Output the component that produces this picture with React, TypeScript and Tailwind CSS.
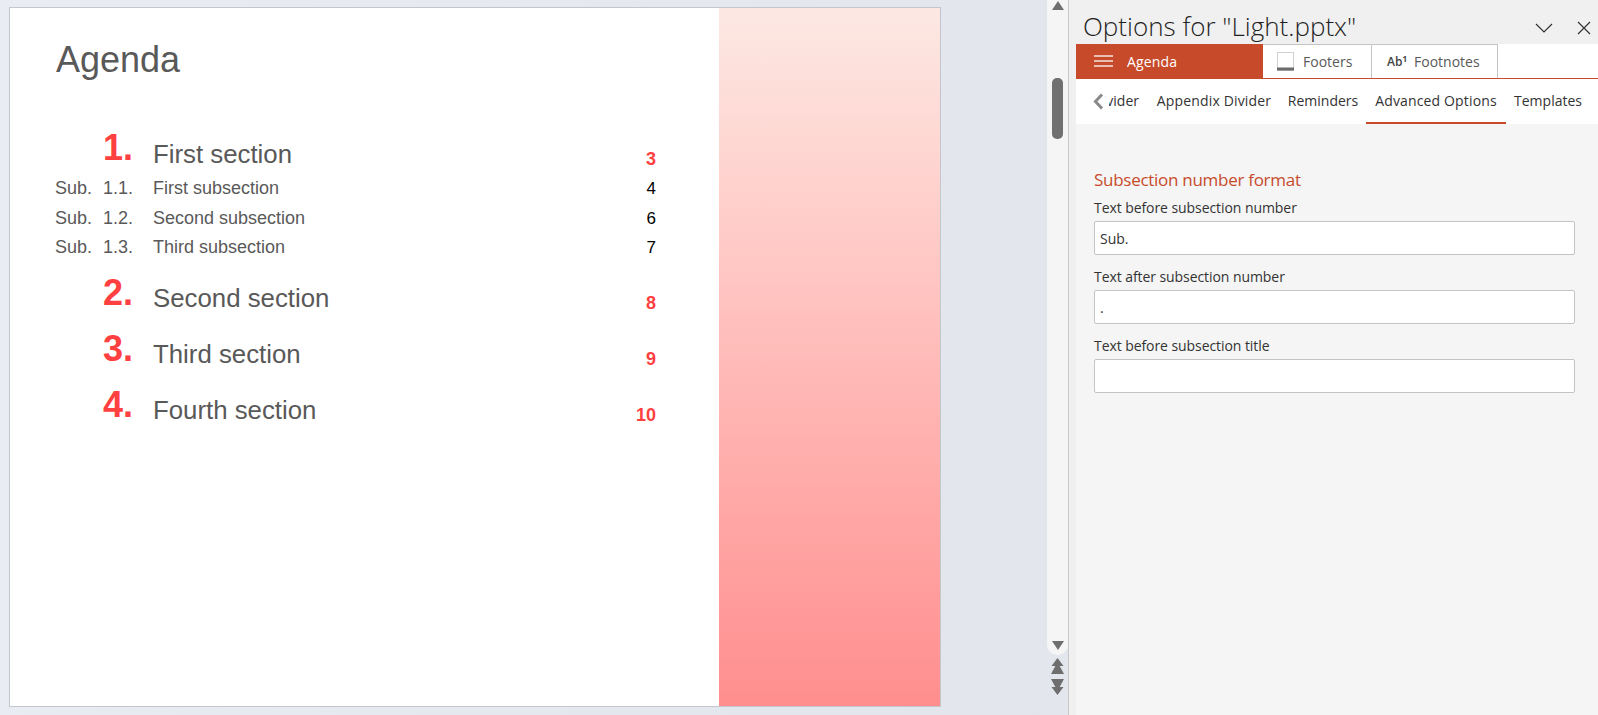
import React from "react";

const sans = "font-['Liberation_Sans',Arial,sans-serif]";
const ui = "font-['Open_Sans','Noto_Sans',sans-serif]";

function Section({ n, title, page, mt, numMt }: { n: string; title: string; page: string; mt: string; numMt: string }) {
  return (
    <div className={`flex h-[42px] items-end ${mt}`}>
      <div className="w-[47px]" />
      <div className={`w-[50px] self-start text-[36px] leading-[36px] font-bold text-[#ff4040] ${numMt}`}>{n}</div>
      <div className="w-[480px] text-[25.8px] leading-[36px] text-[#595959]">{title}</div>
      <div className="w-[23px] text-right text-[18px] leading-[26px] font-bold text-[#ff4040]">{page}</div>
    </div>
  );
}

function Sub({ n, title, page }: { n: string; title: string; page: string }) {
  return (
    <div className="flex h-[29.5px] items-center text-[18px] leading-[24px] text-[#595959]">
      <div className="-ml-[1px] w-[48px]">Sub.</div>
      <div className="w-[50px]">{n}</div>
      <div className="w-[480px]">{title}</div>
      <div className="w-[23px] pt-[2px] text-right text-[17px] text-black">{page}</div>
    </div>
  );
}

function Field({ label, value, mt }: { label: string; value: string; mt: string }) {
  return (
    <div className={mt}>
      <div className="text-[14px] leading-[20px] tracking-[-0.07px] text-[#333]">{label}</div>
      <div className="mt-[3px] flex h-[34px] items-center rounded-[2px] border border-[#c4c4c4] bg-white px-[5px] text-[14px] text-[#333]">
        {value}
      </div>
    </div>
  );
}

function Arrow({ up }: { up: boolean }) {
  return (
    <svg width="12" height="9" viewBox="0 0 12 9" className="block">
      <path d={up ? "M6 0 L12 9 H0 Z" : "M0 0 H12 L6 9 Z"} fill="#6e6e6e" />
    </svg>
  );
}

function DoubleArrow({ up }: { up: boolean }) {
  return (
    <svg width="13" height="16" viewBox="0 0 13 16" className="block">
      <g fill="#6e6e6e" transform={up ? undefined : "rotate(180 6.5 8)"}>
        <path d="M6.5 0 L12.5 8 H0.5 Z" />
        <path d="M6.5 4 L13 16 H0 Z" />
      </g>
    </svg>
  );
}

export default function App() {
  return (
    <div className={`flex h-[715px] w-[1598px] overflow-hidden ${ui}`}>
      <div className="h-full w-[1047px] bg-[linear-gradient(100deg,#e9edf3,#e2e5eb)] pt-[7px] pl-[9px]">
        <div className={`flex h-[700px] w-[932px] border border-[#c3c6cb] bg-white ${sans}`}>
          <div className="w-[709px] pl-[46px]">
            <div className="mt-[30px] text-[36px] leading-[44px] text-[#595959]">Agenda</div>
            <Section n="1." title="First section" page="3" mt="mt-[48px]" numMt="mt-0" />
            <div className="mt-[1.5px]">
              <Sub n="1.1." title="First subsection" page="4" />
              <Sub n="1.2." title="Second subsection" page="6" />
              <Sub n="1.3." title="Third subsection" page="7" />
            </div>
            <Section n="2." title="Second section" page="8" mt="mt-[11.5px]" numMt="mt-[1px]" />
            <Section n="3." title="Third section" page="9" mt="mt-[14px]" numMt="mt-[1px]" />
            <Section n="4." title="Fourth section" page="10" mt="mt-[14px]" numMt="mt-[1px]" />
          </div>
          <div className="flex-1 bg-[linear-gradient(180deg,#fce8e3,#ffd2ce_25%,#ff8e8e)]" />
        </div>
      </div>

      <div className="flex h-full w-[21px] flex-col items-center bg-[#e3e6ec]">
        <div className="flex h-[655px] w-full flex-col items-center rounded-b-[10px] bg-[#f5f5f5]">
          <div className="mt-[1px]">
            <Arrow up />
          </div>
          <div className="mt-[68px] h-[61px] w-[11px] rounded-[5px] bg-[#707070]" />
          <div className="mt-auto mb-[5px]">
            <Arrow up={false} />
          </div>
        </div>
        <div className="mt-[3px]">
          <DoubleArrow up />
        </div>
        <div className="mt-[5px]">
          <DoubleArrow up={false} />
        </div>
      </div>

      <div className="flex h-full flex-1 flex-col border-l border-[#c8c8c8] bg-[#f0f0f0]">
        <div className="flex h-[44px] items-center pt-[8px] pl-[14px]">
          <div className="text-[26px] leading-[35px] font-light whitespace-nowrap text-[#1f1f1f]">
            Options for "Light.pptx"
          </div>
          <svg width="18" height="10" viewBox="0 0 18 10" className="mt-[4px] ml-auto">
            <path d="M1 1 L9 9 L17 1" fill="none" stroke="#333" strokeWidth="1.2" />
          </svg>
          <svg width="14" height="14" viewBox="0 0 14 14" className="mt-[4px] mr-[7px] ml-[24px]">
            <path d="M1 1 L13 13 M13 1 L1 13" fill="none" stroke="#333" strokeWidth="1.2" />
          </svg>
        </div>
        <div className="ml-[7px] flex flex-1 flex-col bg-[#f5f5f5]">
          <div className="flex h-[35px] border-b border-[#c74b2b] bg-white text-[14px]">
            <div className="flex w-[187px] items-center bg-[#c74b2b] pl-[18px] text-white">
              <svg width="19" height="12" viewBox="0 0 19 12">
                <path d="M0 1 H19 M0 6 H19 M0 11 H19" stroke="#fff" strokeOpacity="0.85" strokeWidth="1.5" />
              </svg>
              <span className="ml-[14px] tracking-[0.15px]">Agenda</span>
            </div>
            <div className="flex w-[109px] items-center border-t border-r border-[#c4c4c4] pl-[14px] text-[#595959]">
              <svg width="17" height="19" viewBox="0 0 17 19">
                <rect x="0.5" y="0.5" width="16" height="18" fill="#fff" stroke="#d0d0d0" />
                <rect x="0" y="15.5" width="17" height="3" fill="#6b6b6b" />
              </svg>
              <span className="ml-[9px]">Footers</span>
            </div>
            <div className="flex w-[126px] items-center border-t border-r border-[#c4c4c4] pl-[15px] text-[#595959]">
              <span className="text-[12px] font-semibold text-[#444]">
                Ab<sup className="text-[8px] font-bold">1</sup>
              </span>
              <span className="ml-[7px]">Footnotes</span>
            </div>
          </div>
          <div className="flex h-[45px] items-stretch bg-white text-[14px] whitespace-nowrap text-[#333]">
            <div className="flex w-[28px] items-center justify-end">
              <svg width="11" height="17" viewBox="0 0 11 17">
                <path d="M9 1.5 L2.5 8.5 L9 15.5" fill="none" stroke="#8a8a8a" strokeWidth="3" />
              </svg>
            </div>
            <div className="ml-[5px] flex w-[39px] items-center justify-end overflow-hidden pr-[9px] pb-[2px]">
              <span>Divider</span>
            </div>
            <div className="flex w-[132px] items-center justify-center pb-[2px] tracking-[0.15px]">Appendix Divider</div>
            <div className="flex w-[86px] items-center justify-center pb-[2px]">Reminders</div>
            <div className="flex w-[140px] items-center justify-center border-b-2 border-[#c74b2b] tracking-[0.15px]">
              Advanced Options
            </div>
            <div className="flex w-[84px] items-center justify-center pb-[2px]">Templates</div>
          </div>
          <div className="pt-[45px] pr-[23px] pl-[18px]">
            <div className="text-[17px] leading-[22px] tracking-[-0.28px] text-[#c74b2b]">Subsection number format</div>
            <Field label="Text before subsection number" value="Sub." mt="mt-[7px]" />
            <Field label="Text after subsection number" value="." mt="mt-[12px]" />
            <Field label="Text before subsection title" value="" mt="mt-[12px]" />
          </div>
        </div>
      </div>
    </div>
  );
}
